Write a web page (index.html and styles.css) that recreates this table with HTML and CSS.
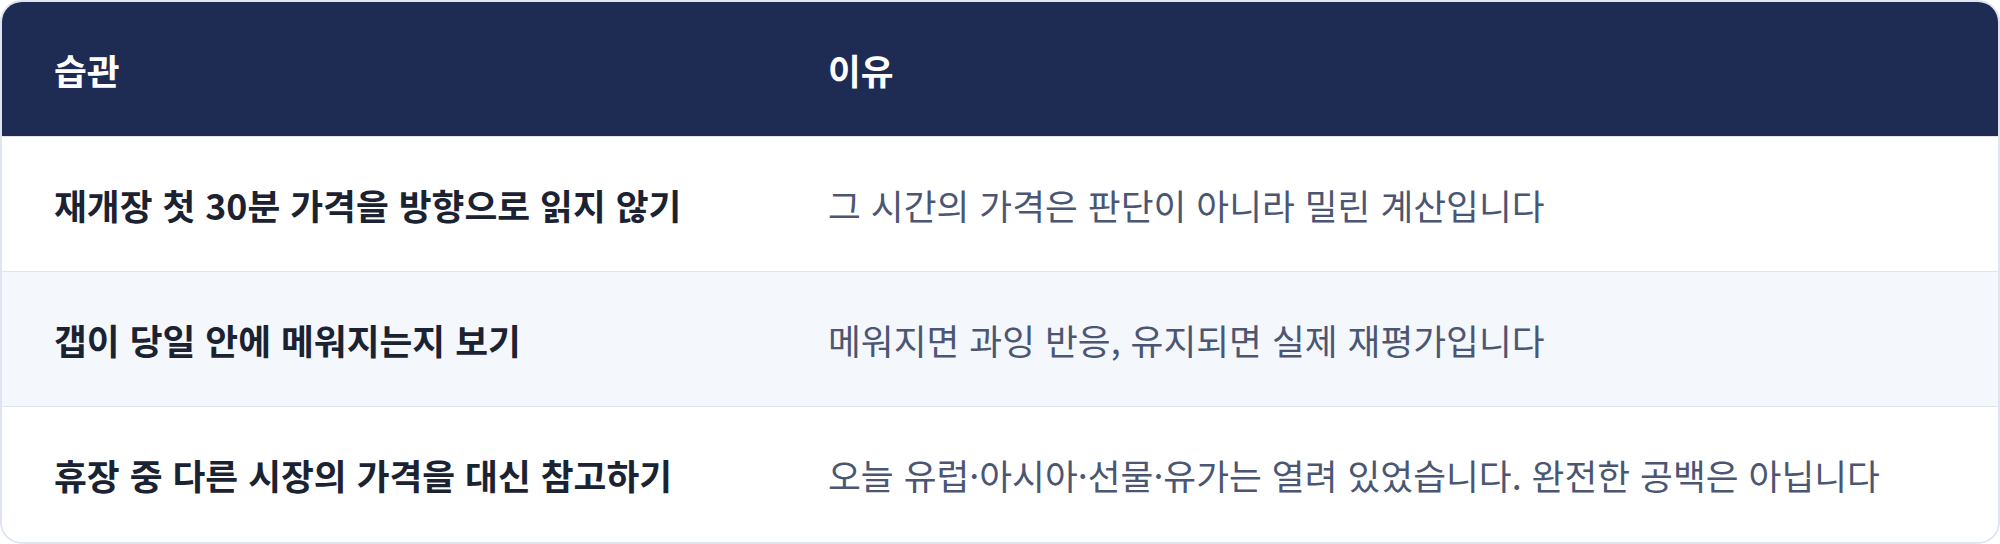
FILE: index.html
```html
<!DOCTYPE html>
<html lang="ko">
<head>
<meta charset="utf-8">
<link rel="stylesheet" href="styles.css">
</head>
<body>
<div class="table">
  <div class="row head">
    <div class="cell">습관</div>
    <div class="cell">이유</div>
  </div>
  <div class="row">
    <div class="cell habit">재개장 첫 30분 가격을 방향으로 읽지 않기</div>
    <div class="cell reason">그 시간의 가격은 판단이 아니라 밀린 계산입니다</div>
  </div>
  <div class="row alt">
    <div class="cell habit">갭이 당일 안에 메워지는지 보기</div>
    <div class="cell reason">메워지면 과잉 반응, 유지되면 실제 재평가입니다</div>
  </div>
  <div class="row">
    <div class="cell habit">휴장 중 다른 시장의 가격을 대신 참고하기</div>
    <div class="cell reason">오늘 유럽·아시아·선물·유가는 열려 있었습니다. 완전한 공백은 아닙니다</div>
  </div>
</div>
</body>
</html>
```

FILE: styles.css
```css
html, body {
  margin: 0;
  padding: 0;
  background: #ffffff;
}
body {
  font-family: "Noto Sans CJK KR", "Noto Sans", sans-serif;
}
.table {
  width: 2000px;
  height: 544px;
  box-sizing: border-box;
  border: 2px solid #dfe5f0;
  border-radius: 22px;
  overflow: hidden;
  display: flex;
  flex-direction: column;
}
.row {
  display: grid;
  grid-template-columns: 774px 1fr;
  height: 134px;
  border-top: 1px solid #dfe5f0;
  background: #ffffff;
}
.row.head {
  height: 134px;
  border-top: none;
  background: #1e2b53;
  color: #ffffff;
  font-weight: 700;
}
.row.alt {
  background: #f4f7fc;
}
.cell {
  display: flex;
  align-items: center;
  padding: 0 52px;
  font-size: 35.7px;
  white-space: nowrap;
}
.habit {
  font-weight: 700;
  color: #1b2333;
}
.reason {
  color: #4b5673;
  font-weight: 400;
}
```
